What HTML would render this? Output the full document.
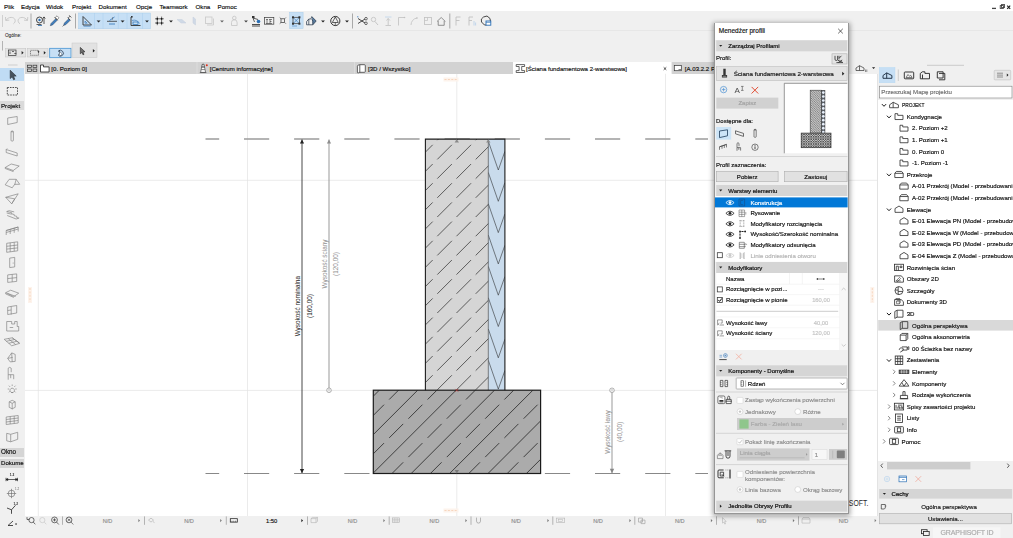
<!DOCTYPE html>
<html lang="pl"><head><meta charset="utf-8"><title>Menedżer profili</title><style>
html,body{margin:0;padding:0}
body{width:1013px;height:538px;position:relative;overflow:hidden;background:#f0f0f0;
 font-family:"Liberation Sans",sans-serif;font-size:6.1px;color:#111;}
div,span,svg{position:absolute;box-sizing:border-box}
.t{white-space:nowrap;line-height:10px;height:10px;-webkit-text-stroke:0.16px}
.sb{-webkit-text-stroke:0.24px}
.b{font-weight:bold}
svg{overflow:visible}
.hdr{background:#d5d5d5}
.btn{background:#e1e1e1;border:0.6px solid #adadad;text-align:center}
.g{color:#9a9a9a}
</style></head><body>
<div id="app" style="left:0;top:0;width:1013px;height:538px;opacity:0.999">
<div style="left:0.00px;top:0.00px;width:1013.00px;height:11.20px;background:#fff"></div>
<div class="t " style="left:4.00px;top:1.50px;font-size:6.2px;">Plik</div>
<div class="t " style="left:21.00px;top:1.50px;font-size:6.2px;">Edycja</div>
<div class="t " style="left:46.00px;top:1.50px;font-size:6.2px;">Widok</div>
<div class="t " style="left:72.00px;top:1.50px;font-size:6.2px;">Projekt</div>
<div class="t " style="left:98.50px;top:1.50px;font-size:6.2px;">Dokument</div>
<div class="t " style="left:136.00px;top:1.50px;font-size:6.2px;">Opcje</div>
<div class="t " style="left:159.50px;top:1.50px;font-size:6.2px;">Teamwork</div>
<div class="t " style="left:195.50px;top:1.50px;font-size:6.2px;">Okna</div>
<div class="t " style="left:217.50px;top:1.50px;font-size:6.2px;">Pomoc</div>
<svg style="left:990.00px;top:3.00px;" width="22.00" height="8.00" viewBox="0 0 22.00 8.00"><path d="M2 5.4h4" stroke="#444" stroke-width="1.3" fill="none"/><rect x="10.2" y="2.6" width="3.2" height="2.8" fill="#fff" stroke="#333" stroke-width="0.8"/><rect x="11.4" y="1.6" width="3.2" height="2.8" fill="none" stroke="#333" stroke-width="0.8"/><path d="M17.2 2.6l3 3.2M20.2 2.6l-3 3.2" stroke="#222" stroke-width="1.15" fill="none"/></svg>
<div style="left:0.00px;top:11.20px;width:1013.00px;height:19.00px;background:#f0f0f0"></div>
<div style="left:0.00px;top:30.00px;width:1013.00px;height:0.60px;background:#e7e7e7"></div>
<svg style="left:0.00px;top:0.00px;" width="1013.00" height="31.00" viewBox="0 0 1013.00 31.00"><path d="M2.5 15v12" stroke="#c8c8c8" stroke-width="0.8"/><path d="M13.4 23.8C16.6 21.6 15.4 17.4 11.2 17.4C9 17.4 7.4 18.5 6 20.2M5.5 17l0.3 3.5 3.5-0.4" stroke="#c4c4c4" stroke-width="0.85" fill="none"/><path d="M19.9 23.8C16.7 21.6 17.9 17.4 22.1 17.4C24.3 17.4 25.9 18.5 27.3 20.2M27.8 17l-0.3 3.5-3.5-0.4" stroke="#c4c4c4" stroke-width="0.85" fill="none"/><path d="M31.00 13.5v15" stroke="#8a8a8a" stroke-width="0.7"/><circle cx="39.5" cy="20" r="3" fill="none" stroke="#333" stroke-width="0.9"/><circle cx="39.5" cy="20" r="1.2" fill="#2a6fb5"/><path d="M36.5 24.5h5M44 17v7M42.7 18.5l1.3-1.6 1.3 1.6" stroke="#333" stroke-width="0.8" fill="none"/><path d="M38 25.5h4" stroke="#2a6fb5" stroke-width="0.8"/><path d="M50.3 25.7l0.8-2.3 4.6-4.6 1.5 1.5-4.6 4.6z" fill="#3f7fc0" stroke="#1f3550" stroke-width="0.45"/><path d="M55.2 17.6l1.8-1.8 2 2-1.8 1.8z" fill="#fff" stroke="#333" stroke-width="0.5"/><path d="M54.6 17.2l3 3" stroke="#333" stroke-width="0.8"/><path d="M63.6 25.4l0.8-2.3 4.4-4.4 1.5 1.5-4.4 4.4z" fill="#3f7fc0" stroke="#1f3550" stroke-width="0.45"/><path d="M68.2 18l2-2M69.2 15.3l2.2 2.2M67.6 17.6l2.6 2.6M63.6 25.4l-1 1" stroke="#333" stroke-width="0.7"/><path d="M75.50 13.5v15" stroke="#8a8a8a" stroke-width="0.7"/><rect x="78.5" y="13" width="72" height="15.8" fill="#c6dff5" stroke="#a9cdec" stroke-width="0.5"/><path d="M94.5 13v15.8M103 13v15.8M118.3 13v15.8M127 13v15.8M142.5 13v15.8" stroke="#a9cdec" stroke-width="0.5"/><path d="M83 16.5v8.5h8.5z" fill="none" stroke="#333" stroke-width="0.9"/><path d="M85 21v2.2h2.2z" fill="none" stroke="#2a6fb5" stroke-width="0.6"/><path d="M83.6 26.2h7" stroke="#2a6fb5" stroke-width="0.6"/><path d="M96.65 20.40l1.95 2.2l1.95-2.2z" fill="#222"/><path d="M107 21.3h10" stroke="#333" stroke-width="0.8"/><path d="M109 24h6" stroke="#2a6fb5" stroke-width="0.8"/><path d="M109.5 20.5l5-3.5" stroke="#2a6fb5" stroke-width="0.8"/><path d="M112.5 17v3" stroke="#666" stroke-width="0.5"/><path d="M120.65 20.40l1.95 2.2l1.95-2.2z" fill="#222"/><path d="M131 17v8.5h9.5" fill="none" stroke="#333" stroke-width="0.9"/><rect x="131" y="16" width="1.6" height="1.6" fill="#333"/><rect x="133" y="22" width="5" height="2.5" fill="none" stroke="#2a6fb5" stroke-width="0.7"/><path d="M132 20.5a6 6 0 0 1 7.5 3" fill="none" stroke="#2a6fb5" stroke-width="0.6"/><path d="M145.05 20.40l1.95 2.2l1.95-2.2z" fill="#222"/><path d="M157.3 16.6v8.6M161.6 16.6v8.6M155 18.8h8.8M155 23h8.8" stroke="#222" stroke-width="0.65"/><g fill="#111"><circle cx="157.3" cy="18.8" r="0.85"/><circle cx="161.6" cy="18.8" r="0.85"/><circle cx="157.3" cy="23" r="0.85"/><circle cx="161.6" cy="23" r="0.85"/></g><path d="M169.05 20.40l1.95 2.2l1.95-2.2z" fill="#222"/><path d="M177 19.5l5 0 4 3.5-5 0z" fill="#cfd9e6" stroke="#c5cfdc" stroke-width="0.5"/><path d="M193 17l2.5 2v6l-2.5-2z" fill="#cfd9e6" stroke="#c5cfdc" stroke-width="0.5"/><rect x="205.5" y="17" width="6.5" height="6.5" fill="none" stroke="#c8c8c8" stroke-width="0.8"/><path d="M207 25h6.5v-6.5" fill="none" stroke="#c8c8c8" stroke-width="0.8"/><path d="M220.05 20.40l1.95 2.2l1.95-2.2z" fill="#666"/><circle cx="234.3" cy="18" r="1.8" fill="none" stroke="#c4c4c4" stroke-width="0.8"/><path d="M231.5 25.5v-3a2.8 2.8 0 0 1 5.6 0v3z" fill="none" stroke="#c4c4c4" stroke-width="0.8"/><path d="M244.05 20.40l1.95 2.2l1.95-2.2z" fill="#444"/><path d="M252 24.5h8M252 26h8" stroke="#222" stroke-width="0.8"/><path d="M253 18l5 1.5M253 18l1.5 4" stroke="#333" stroke-width="0.8"/><circle cx="258.5" cy="21.5" r="1.8" fill="#2a6fb5"/><rect x="252" y="16" width="2.5" height="2" fill="#333"/><rect x="264.6" y="17.6" width="9.2" height="6.6" fill="none" stroke="#444" stroke-width="0.75"/><path d="M267 19.5v4M266 19.5h2M270 19.5v4M269 19.5h3M270 21.5h1.5M266 23.5h6" stroke="#333" stroke-width="0.6"/><rect x="281" y="18.8" width="3.6" height="3.6" fill="none" stroke="#333" stroke-width="0.7"/><path d="M281 18.8l-1.3-1.3M284.6 18.8l1.3-1.3M281 22.4l-1.3 1.3M284.6 22.4l1.3 1.3" stroke="#333" stroke-width="0.65"/><rect x="289.7" y="12.3" width="13.4" height="16.3" fill="#c6dff5" stroke="#a9cdec" stroke-width="0.5"/><rect x="293" y="17.3" width="6.4" height="6.4" fill="none" stroke="#333" stroke-width="0.7"/><path d="M293 17.3l6.4 6.4M299.4 17.3l-6.4 6.4" stroke="#2a6fb5" stroke-width="0.6"/><g fill="#333"><rect x="292" y="16.3" width="2" height="2"/><rect x="298.4" y="16.3" width="2" height="2"/><rect x="292" y="22.7" width="2" height="2"/><rect x="298.4" y="22.7" width="2" height="2"/></g><path d="M292 26h5" stroke="#2a6fb5" stroke-width="0.5"/><path d="M311.8 16.6l4.4 4.4-3.4 3.8z" fill="#5b7d9f"/><path d="M306.6 21.6l2.2-2.6h2l1-2.4 4.4 4.4-3.4 3.8h-6.2zM308.8 19v5.8M312.8 24.8v-3.6l-1-2.2" fill="none" stroke="#2b3b4d" stroke-width="0.75"/><path d="M321.05 20.40l1.95 2.2l1.95-2.2z" fill="#222"/><circle cx="335.3" cy="21" r="4.6" fill="none" stroke="#222" stroke-width="0.9"/><path d="M335.3 17l-3 5.5h6z" fill="none" stroke="#222" stroke-width="0.7"/><path d="M335.3 22.5v3" stroke="#222" stroke-width="0.6"/><path d="M345.05 20.40l1.95 2.2l1.95-2.2z" fill="#222"/><path d="M352.50 13.5v15" stroke="#8a8a8a" stroke-width="0.7"/><path d="M358 18.5l7 4.5M358 23.5l7-4.5" stroke="#333" stroke-width="0.9"/><circle cx="366" cy="18.7" r="1.3" fill="none" stroke="#333" stroke-width="0.7"/><circle cx="366" cy="23.3" r="1.3" fill="none" stroke="#333" stroke-width="0.7"/><path d="M357.8 16v1.5" stroke="#2a6fb5" stroke-width="0.7"/><circle cx="373.5" cy="19.5" r="2.2" fill="none" stroke="#c0c0c0" stroke-width="0.8"/><path d="M375 21.5l3 3.5" stroke="#c0c0c0" stroke-width="0.9"/><path d="M385 17h6.5" stroke="#bcd3ea" stroke-width="0.8"/><path d="M388.2 18.5v6.5M386.5 20.5l1.7-2 1.7 2M385.5 25.5h5.5" stroke="#c0c0c0" stroke-width="0.8" fill="none"/><path d="M398.5 25.5v-8h6" stroke="#c0c0c0" stroke-width="0.8" fill="none"/><circle cx="404.5" cy="17.5" r="0.8" fill="#c0c0c0"/><path d="M411 25a7 7 0 0 1 6-7" stroke="#c0c0c0" stroke-width="0.8" fill="none"/><circle cx="417" cy="18" r="0.8" fill="#c0c0c0"/><rect x="424.5" y="17.5" width="7" height="7" fill="none" stroke="#c0c0c0" stroke-width="0.8"/><path d="M424.5 20.5h3v-3" stroke="#c0c0c0" stroke-width="0.7" fill="none"/><path d="M437 21.5l4.2-4 4.2 4M438.2 21v4.3h6v-4.3" stroke="#777" stroke-width="0.8" fill="none"/><path d="M449.80 13.5v15" stroke="#8a8a8a" stroke-width="0.7"/><path d="M456 25.5v-8.5h4.5M456 20.5h3.5" stroke="#c0c0c0" stroke-width="0.9" fill="none"/><path d="M469 25.5v-8.5h4M469 20.5h3" stroke="#c0c0c0" stroke-width="0.9" fill="none"/><path d="M474 21v4.5M475.6 22.5v3" stroke="#bcd3ea" stroke-width="0.9"/><path d="M481.5 22a4 4 0 0 1 2-5l3.5-1 3 2.5 0.5 3.5" stroke="#333" stroke-width="0.9" fill="none"/><path d="M481.5 22l3 3h2" stroke="#333" stroke-width="0.9" fill="none"/><rect x="486" y="21" width="4.8" height="4.2" fill="#fff" stroke="#2a6fb5" stroke-width="0.9"/><path d="M486 22.3h4.8" stroke="#2a6fb5" stroke-width="0.7"/></svg>
<div style="left:0.00px;top:30.60px;width:1013.00px;height:31.40px;background:#f0f0f0"></div>
<div class="t " style="left:4.90px;top:30.90px;font-size:4.7px;color:#222;-webkit-text-stroke:0.05px">Ogólne:</div>
<svg style="left:0.00px;top:0.00px;" width="120.00" height="62.00" viewBox="0 0 120.00 62.00"><path d="M2.5 41v9.5" stroke="#9a9a9a" stroke-width="0.7"/><rect x="5.5" y="48.3" width="20.3" height="8.7" fill="#e4e4e4" stroke="#c2c2c2" stroke-width="0.5"/><rect x="8.5" y="50" width="7.5" height="5.5" fill="none" stroke="#333" stroke-width="0.7"/><path d="M10 51.5v2.5M12 51.5l2 0M14.3 53.5h2" stroke="#333" stroke-width="0.7"/><path d="M21.6 50.9l2 1.8-2 1.8z" fill="#222"/><rect x="27.5" y="48.3" width="20.5" height="8.7" fill="#e4e4e4" stroke="#c2c2c2" stroke-width="0.5"/><rect x="30.5" y="50.3" width="8" height="5" fill="none" stroke="#333" stroke-width="0.6" stroke-dasharray="1.2 0.8"/><path d="M37.5 50.5l2.3 1.5-1.2 0.3-0.3 1.2z" fill="#222"/><path d="M43.8 50.9l2 1.8-2 1.8z" fill="#222"/><rect x="49.7" y="48.3" width="21.3" height="9.4" fill="#c6dff5" stroke="#3c8fd0" stroke-width="0.75"/><path d="M58 54.8a2.9 2.9 0 1 0 0.4-3.6" fill="none" stroke="#1f3044" stroke-width="0.75"/><path d="M59.6 49.8l-1.6 1.5 2 0.5z" fill="#1f3044"/><path d="M59.5 54.4v-2.4l0.8 0.2 0.8 0.4 0.6 0.8v1.2l-0.8 0.9h-1.1l-1.2-1.3z" fill="#fff" stroke="#1f3044" stroke-width="0.5"/><rect x="72" y="43" width="25" height="14.5" fill="#e2e2e2" stroke="#c6c6c6" stroke-width="0.5"/><path d="M80.3 47.4v6.4l1.6-1.4 1.1 2.4 1-0.45-1.1-2.4 2.1-0.15z" fill="#6e6e6e" stroke="#262626" stroke-width="0.6"/><path d="M92.9 48.9l2 1.8-2 1.8z" fill="#222"/></svg>
<div style="left:25.00px;top:62.00px;width:853.00px;height:11.80px;background:#d2d2d2"></div>
<div style="left:0.00px;top:62.00px;width:25.00px;height:5.50px;background:#f0f0f0"></div>
<div style="left:513.00px;top:62.00px;width:158.50px;height:11.80px;background:#fff"></div>
<div style="left:849.00px;top:62.00px;width:29.00px;height:11.80px;background:#f0f0f0"></div>
<svg style="left:0.00px;top:0.00px;" width="1013.00" height="75.00" viewBox="0 0 1013.00 75.00"><g fill="none" stroke="#333" stroke-width="0.7"><rect x="27.6" y="65.2" width="3.8" height="2.4"/><rect x="33" y="65.2" width="3.8" height="2.4"/><rect x="27.6" y="69" width="3.8" height="2.4"/><rect x="33" y="69" width="3.8" height="2.4"/></g><path d="M39.5 62v11.8" stroke="#dedede" stroke-width="0.8"/><path d="M197.0 62v11.8" stroke="#dedede" stroke-width="0.8"/><path d="M354.5 62v11.8" stroke="#dedede" stroke-width="0.8"/><path d="M671.8 62v11.8" stroke="#dedede" stroke-width="0.8"/><path d="M40.5 72v-7h3v1.9h5.6v5.1z" fill="#fff" stroke="#2e2e2e" stroke-width="0.85"/><path d="M200.6 72.4l1.1-5.4h2.8l1.1 5.4zM201.2 67h3.8M201.9 67v-2.2h2.4v2.2M201.9 64.8l1.2-0.9 1.2 0.9M199.8 72.6h6.6M201.3 69.6h3.6" fill="#fff" stroke="#3a3a3a" stroke-width="0.6"/><circle cx="206.8" cy="65.2" r="1" fill="#e0301c"/><path d="M357.4 66.2q0-0.8 0.8-1l1.6-0.5h4.6q0.9 0 0.9 0.9v5.8q0 0.9-0.9 0.9h-4.6l-1.6 0.6q-0.8 0.2-0.8-0.7zM359.8 64.8v7.6" fill="#fff" stroke="#333" stroke-width="0.75"/><path d="M516.2 64.6h8.4v1.9h-2.9v4.1h2.9v1.9h-8.4v-1.9h2.9v-4.1h-2.9z" fill="#fff" stroke="#333" stroke-width="0.75"/><path d="M663.7 67.3l2.6 2.6M666.3 67.3l-2.6 2.6" stroke="#222" stroke-width="0.8"/><rect x="674.3" y="65.5" width="7" height="5.2" fill="#fff" stroke="#333" stroke-width="0.7"/><path d="M678.5 69.5h2.5" stroke="#333" stroke-width="0.6"/><path d="M856 70.5v-2.5l3.5-2.3 4.5 2.3v2.5zM859.5 65.7v4.8" fill="none" stroke="#333" stroke-width="0.7"/><path d="M865.5 69.5v2.5M866.8 69.5v2.5" stroke="#333" stroke-width="0.5"/><path d="M872 67.3l1.6 1.8 1.6-1.8z" fill="#222"/></svg>
<div class="t " style="left:51.30px;top:63.70px;font-size:6.1px;">[0. Poziom 0]</div>
<div class="t " style="left:209.70px;top:63.70px;font-size:6.1px;">[Centrum informacyjne]</div>
<div class="t " style="left:368.00px;top:63.70px;font-size:6.1px;">[3D / Wszystko]</div>
<div class="t " style="left:526.00px;top:63.70px;font-size:6.1px;">[Ściana fundamentowa 2-warstwowa]</div>
<div class="t " style="left:684.80px;top:63.70px;font-size:6.1px;">[A.03.2.2 Po</div>
<div style="left:25.00px;top:73.80px;width:853.00px;height:442.70px;background:#fff"></div>
<svg style="left:0.00px;top:0.00px;" width="1013.00" height="538.00" viewBox="0 0 1013.00 538.00"><path d="M25 180.3h853" stroke="#e3e3e3" stroke-width="0.7"/><path d="M25 390.4h853" stroke="#e3e3e3" stroke-width="0.7"/><path d="M38.3 73.8v442.7" stroke="#e3e3e3" stroke-width="0.7"/><path d="M247.5 73.8v442.7" stroke="#e3e3e3" stroke-width="0.7"/><path d="M456.8 73.8v442.7" stroke="#e3e3e3" stroke-width="0.7"/><path d="M665.5 73.8v442.7" stroke="#e3e3e3" stroke-width="0.7"/><rect x="443.5" y="77.5" width="15" height="4" fill="#fdf3ec"/><path d="M444.5 79.5h13.5" stroke="#f3c3a0" stroke-width="0.6" stroke-dasharray="2 1.4"/><rect x="443.5" y="508.5" width="15" height="4" fill="#fdf3ec"/><path d="M444.5 510.5h13.5" stroke="#f3c3a0" stroke-width="0.6" stroke-dasharray="2 1.4"/><rect x="28" y="287" width="4" height="16" fill="#fdf3ec"/><path d="M30 288v14" stroke="#f3c3a0" stroke-width="0.6" stroke-dasharray="2 1.4"/><rect x="870.3" y="287" width="4" height="16" fill="#fdf3ec"/><path d="M872.3 288v14" stroke="#f3c3a0" stroke-width="0.6" stroke-dasharray="2 1.4"/><path d="M205.5 139.1H219.2M244.0 139.1H269.2M294.1 139.1H319.3M344.3 139.1H369.5M394.4 139.1H419.6M444.6 139.1H469.8M494.7 139.1H519.9M544.9 139.1H570.1M595.0 139.1H620.2M645.2 139.1H670.4M695.3 139.1H708.0" stroke="#9c9c9c" stroke-width="1.5"/><path d="M205.5 473.5H219.2M244.0 473.5H269.2M294.1 473.5H319.3M344.3 473.5H369.5M394.4 473.5H419.6M444.6 473.5H469.8M494.7 473.5H519.9M544.9 473.5H570.1M595.0 473.5H620.2M645.2 473.5H670.4M695.3 473.5H708.0" stroke="#555" stroke-width="0.7"/><defs><clipPath id="cw"><rect x="425.4" y="139.1" width="62.9" height="251.1"/></clipPath><clipPath id="cb"><rect x="488.3" y="139.1" width="16.6" height="251.1"/></clipPath><clipPath id="cf"><rect x="373.3" y="390.2" width="167.3" height="83.3"/></clipPath></defs><rect x="425.4" y="139.1" width="62.9" height="251.1" fill="#d5d5d5"/><rect x="488.3" y="139.1" width="16.6" height="251.1" fill="#c9dbec"/><rect x="373.3" y="390.2" width="167.3" height="83.3" fill="#ababab"/><g clip-path="url(#cw)" stroke="#333" stroke-width="0.75" stroke-dasharray="20.60 6.55" fill="none"><path d="M418.10 159.40L439.40 138.10"/><path d="M418.10 178.60L458.60 138.10"/><path d="M418.10 197.80L477.80 138.10"/><path d="M418.10 217.00L489.30 145.80"/><path d="M418.10 236.20L489.30 165.00"/><path d="M418.10 255.40L489.30 184.20"/><path d="M418.10 274.60L489.30 203.40"/><path d="M418.10 293.80L489.30 222.60"/><path d="M418.10 313.00L489.30 241.80"/><path d="M418.10 332.20L489.30 261.00"/><path d="M418.10 351.40L489.30 280.20"/><path d="M418.10 370.60L489.30 299.40"/><path d="M418.10 389.80L489.30 318.60"/><path d="M418.10 409.00L489.30 337.80"/><path d="M437.30 409.00L489.30 357.00"/><path d="M456.50 409.00L489.30 376.20"/></g><g clip-path="url(#cf)" stroke="#1c1c1c" stroke-width="0.75" fill="none"><path d="M373.30 396.20L379.30 390.20"/><path d="M373.30 434.60L417.70 390.20"/><path d="M373.30 473.00L456.10 390.20"/><path d="M411.20 473.50L494.50 390.20"/><path d="M449.60 473.50L532.90 390.20"/><path d="M488.00 473.50L540.60 420.90"/><path d="M526.40 473.50L540.60 459.30"/><g stroke-dasharray="19.80 7.35"><path d="M370.00 418.70L399.50 389.20"/><path d="M370.00 457.10L437.90 389.20"/><path d="M389.20 476.30L476.30 389.20"/><path d="M427.60 476.30L514.70 389.20"/><path d="M466.00 476.30L541.60 400.70"/><path d="M504.40 476.30L541.60 439.10"/></g></g><path clip-path="url(#cb)" d="M488.3 141.2L498.3 170.0L504.9 151.4M488.3 172.5L498.3 201.3L504.9 182.7M488.3 203.8L498.3 232.6L504.9 214.0M488.3 235.1L498.3 263.9L504.9 245.3M488.3 266.4L498.3 295.2L504.9 276.6M488.3 297.7L498.3 326.5L504.9 307.9M488.3 329.0L498.3 357.8L504.9 339.2M488.3 360.3L498.3 389.1L504.9 370.5" stroke="#222" stroke-width="0.55" fill="none"/><path d="M488.3 139.1V390.2" stroke="#333" stroke-width="0.6"/><path d="M425.4 390.2V139.1H504.9V390.2" stroke="#1e1e1e" stroke-width="1.1" fill="none"/><rect x="373.3" y="390.2" width="167.3" height="83.3" stroke="#1a1a1a" stroke-width="1.2" fill="none"/><path d="M454.6 142.6l2.2-3.4 2.2 3.4zM486.1 142.6l2.2-3.4 2.2 3.4z" fill="#8a8a8a"/><path d="M454.6 470l2.2 3.4 2.2-3.4z" fill="#7a7a7a"/><path d="M455.4 388.9l2.8 2.8M458.2 388.9l-2.8 2.8" stroke="#b03030" stroke-width="0.7"/><path d="M302 139.5V473" stroke="#333" stroke-width="0.9"/><path d="M299.9 143.6l2.1-4.2 2.1 4.2zM299.9 469l2.1 4.2 2.1-4.2z" fill="#222"/><path d="M329 139.5V388" stroke="#939393" stroke-width="0.95"/><path d="M326.9 143.6l2.1-4.2 2.1 4.2z" fill="#8e8e8e"/><circle cx="329" cy="390.3" r="2.3" fill="#fff" stroke="#7e7e7e" stroke-width="0.6"/><circle cx="329" cy="390.3" r="0.9" fill="none" stroke="#9a9a9a" stroke-width="0.4"/><path d="M612 392.6V473" stroke="#939393" stroke-width="0.95"/><path d="M609.8 468.8l2.2 4.4 2.2-4.4z" fill="#858585"/><circle cx="612" cy="390.3" r="2.3" fill="#fff" stroke="#7e7e7e" stroke-width="0.6"/><circle cx="612" cy="390.3" r="0.9" fill="none" stroke="#9a9a9a" stroke-width="0.4"/><text transform="translate(300.3 306.2) rotate(-90) scale(0.89 1)" text-anchor="middle" font-size="7.2" fill="#1e1e1e" font-family="Liberation Sans, sans-serif">Wysokość nominalna</text><text transform="translate(311.8 306.0) rotate(-90) scale(0.89 1)" text-anchor="middle" font-size="7.2" fill="#1e1e1e" font-family="Liberation Sans, sans-serif">(160,00)</text><text transform="translate(327.2 264.0) rotate(-90) scale(0.89 1)" text-anchor="middle" font-size="7.2" fill="#8e8e8e" font-family="Liberation Sans, sans-serif">Wysokość ściany</text><text transform="translate(337.8 264.0) rotate(-90) scale(0.89 1)" text-anchor="middle" font-size="7.2" fill="#8e8e8e" font-family="Liberation Sans, sans-serif">(120,00)</text><text transform="translate(610.2 432.0) rotate(-90) scale(0.89 1)" text-anchor="middle" font-size="7.2" fill="#8e8e8e" font-family="Liberation Sans, sans-serif">Wysokość ławy</text><text transform="translate(621.6 432.0) rotate(-90) scale(0.89 1)" text-anchor="middle" font-size="7.2" fill="#8e8e8e" font-family="Liberation Sans, sans-serif">(40,00)</text><text transform="translate(868.4 506.4) scale(0.72 1)" text-anchor="end" font-size="9.6" fill="#2a2a2a" font-family="Liberation Sans, sans-serif">GRAPHISOFT.</text></svg>
<div style="left:25.00px;top:516.40px;width:853.00px;height:10.20px;background:#f0f0f0"></div>
<div style="left:0.00px;top:526.60px;width:1013.00px;height:11.40px;background:#f0f0f0"></div>
<svg style="left:0.00px;top:0.00px;" width="1013.00" height="538.00" viewBox="0 0 1013.00 538.00"><g transform="translate(0 -0.9)"><path d="M62.5 517.3v8.4" stroke="#8a8a8a" stroke-width="0.6"/><path d="M144.5 517.3v8.4" stroke="#8a8a8a" stroke-width="0.6"/><path d="M226.3 517.3v8.4" stroke="#8a8a8a" stroke-width="0.6"/><path d="M307.5 517.3v8.4" stroke="#8a8a8a" stroke-width="0.6"/><path d="M389.2 517.3v8.4" stroke="#8a8a8a" stroke-width="0.6"/><path d="M471.0 517.3v8.4" stroke="#8a8a8a" stroke-width="0.6"/><path d="M552.8 517.3v8.4" stroke="#8a8a8a" stroke-width="0.6"/><path d="M634.8 517.3v8.4" stroke="#8a8a8a" stroke-width="0.6"/><path d="M716.5 517.3v8.4" stroke="#8a8a8a" stroke-width="0.6"/><path d="M798.5 517.3v8.4" stroke="#8a8a8a" stroke-width="0.6"/><circle cx="31.5" cy="521" r="2.6" fill="none" stroke="#333" stroke-width="0.7"/><path d="M33.3 523l2 2.2M27 518v2.4h2.4" stroke="#333" stroke-width="0.7" fill="none"/><circle cx="42.3" cy="521" r="2.6" fill="none" stroke="#c8c8c8" stroke-width="0.7"/><path d="M44.3 523l2 2.2" stroke="#c8c8c8" stroke-width="0.7" fill="none"/><circle cx="54.5" cy="520.8" r="2.9" fill="none" stroke="#333" stroke-width="0.7"/><path d="M56.6 523l2.2 2.4M53 520.8h3M54.5 519.3v3" stroke="#333" stroke-width="0.7" fill="none"/><circle cx="69" cy="520.8" r="2.9" fill="none" stroke="#333" stroke-width="0.7"/><path d="M71.1 523l2.2 2.4M67.5 519.5l3 2.6M70.5 519.5l-3 2.6" stroke="#333" stroke-width="0.6" fill="none"/><path d="M138.40 519.90l1.6 1.6-1.6 1.6z" fill="#777"/><path d="M148.5 521l2.5-2 2.5 2-2.5 2zM153 522.5l1.5 1" stroke="#b4b4b4" stroke-width="0.7" fill="none"/><path d="M220.20 519.90l1.6 1.6-1.6 1.6z" fill="#777"/><rect x="230.3" y="519.6" width="7" height="3.4" fill="#fff" stroke="#222" stroke-width="0.8"/><path d="M232 521.5v1.5M233.8 521.5v1.5M235.6 521.5v1.5" stroke="#222" stroke-width="0.5"/><path d="M301.40 519.90l1.6 1.6-1.6 1.6z" fill="#111"/><path d="M311 519.5l1.5-1.2h5v4l-1.5 1.2h-5zM311 519.5h5v4M316 519.5l1.5-1.2" stroke="#b4b4b4" stroke-width="0.6" fill="none"/><path d="M383.40 519.90l1.6 1.6-1.6 1.6z" fill="#777"/><rect x="392.5" y="518.8" width="7" height="4.6" fill="none" stroke="#b4b4b4" stroke-width="0.6"/><path d="M392.5 520.3h7M392.5 521.8h7M394.8 518.8v4.6M397.2 518.8v4.6" stroke="#b4b4b4" stroke-width="0.5"/><path d="M465.40 519.90l1.6 1.6-1.6 1.6z" fill="#777"/><path d="M476.5 518.5v3.5a2 2 0 0 0 4 0v-3.5" stroke="#999" stroke-width="0.7" fill="none"/><path d="M547.40 519.90l1.6 1.6-1.6 1.6z" fill="#777"/><rect x="556.3" y="519" width="8.4" height="4.6" fill="none" stroke="#b4b4b4" stroke-width="0.6"/><rect x="558.6" y="520.3" width="3.8" height="2" fill="none" stroke="#b4b4b4" stroke-width="0.5"/><path d="M629.40 519.90l1.6 1.6-1.6 1.6z" fill="#777"/><path d="M638.5 519h4v4h-4zM641 521h4v3.5h-4z" stroke="#999" stroke-width="0.6" fill="none"/><path d="M710.90 519.90l1.6 1.6-1.6 1.6z" fill="#777"/><path d="M722.5 518.5v5.5l1.3-1 1 2 0.8-0.4-1-2 1.6-0.2z" stroke="#b4b4b4" stroke-width="0.6" fill="none"/><path d="M792.90 519.90l1.6 1.6-1.6 1.6z" fill="#777"/><path d="M802 520h8v4h-8zM802 520l1-1.5h6l1 1.5" stroke="#b4b4b4" stroke-width="0.6" fill="none"/><path d="M874.70 519.90l1.6 1.6-1.6 1.6z" fill="#777"/></g></svg>
<div class="t " style="left:97.50px;top:515.90px;width:20.00px;text-align:center;color:#8f8f8f;font-size:5.6px;">N/D</div>
<div class="t " style="left:179.00px;top:515.90px;width:20.00px;text-align:center;color:#8f8f8f;font-size:5.6px;">N/D</div>
<div class="t " style="left:342.60px;top:515.90px;width:20.00px;text-align:center;color:#8f8f8f;font-size:5.6px;">N/D</div>
<div class="t " style="left:424.40px;top:515.90px;width:20.00px;text-align:center;color:#8f8f8f;font-size:5.6px;">N/D</div>
<div class="t " style="left:506.00px;top:515.90px;width:20.00px;text-align:center;color:#8f8f8f;font-size:5.6px;">N/D</div>
<div class="t " style="left:588.00px;top:515.90px;width:20.00px;text-align:center;color:#8f8f8f;font-size:5.6px;">N/D</div>
<div class="t " style="left:669.80px;top:515.90px;width:20.00px;text-align:center;color:#8f8f8f;font-size:5.6px;">N/D</div>
<div class="t " style="left:751.50px;top:515.90px;width:20.00px;text-align:center;color:#8f8f8f;font-size:5.6px;">N/D</div>
<div class="t " style="left:833.50px;top:515.90px;width:20.00px;text-align:center;color:#8f8f8f;font-size:5.6px;">N/D</div>
<div class="t " style="left:266.00px;top:515.90px;font-size:5.8px;color:#111">1:50</div>
<div style="left:0.00px;top:67.40px;width:24.60px;height:459.20px;background:#f0f0f0"></div>
<div style="left:0.00px;top:67.50px;width:24.40px;height:13.90px;background:#c0dcf4"></div>
<div style="left:0.00px;top:101.40px;width:24.40px;height:9.00px;background:#dadada"></div>
<div style="left:0.00px;top:447.50px;width:24.40px;height:9.20px;background:#d5d5d5"></div>
<div style="left:0.00px;top:458.60px;width:24.40px;height:9.40px;background:#d5d5d5"></div>
<div class="t " style="left:1.00px;top:101.20px;font-size:6.15px">Projekt</div>
<div class="t " style="left:1.00px;top:447.10px;font-size:6.3px">Okno</div>
<div class="t " style="left:1.00px;top:458.10px;font-size:6.1px;width:23px;overflow:hidden">Dokume</div>
<svg style="left:0.00px;top:0.00px;overflow:hidden" width="26.00" height="527.00" viewBox="0 0 26.00 527.00"><path d="M8 65h9.5" stroke="#c9c9c9" stroke-width="0.9"/><path d="M10.2 70.2v8.4l2-1.8 1.4 3 1.3-0.6-1.4-3 2.7-0.2z" fill="#46535f" stroke="#2a3038" stroke-width="0.6"/><rect x="7.3" y="87.5" width="10.2" height="7.5" fill="none" stroke="#222" stroke-width="0.8" stroke-dasharray="1.6 1"/><g transform="translate(12.2 120.5)" fill="none" stroke="#7d7d7d" stroke-width="0.65"><path d="M-4.5 -2.5l9.5-1.5v6l-9.5 2z"/></g><g transform="translate(12.2 136.3)" fill="none" stroke="#7d7d7d" stroke-width="0.65"><path d="M-1.2 -4.5h2.4v8.5a1.2 0.8 0 0 1-2.4 0zM-1.2 -4.5a1.2 0.8 0 0 1 2.4 0"/></g><g transform="translate(12.2 152.0)" fill="none" stroke="#7d7d7d" stroke-width="0.65"><path d="M-6 -2.5l11 3.5v3l-11-3.5zM-6 -2.5l1-1"/></g><g transform="translate(12.2 167.5)" fill="none" stroke="#7d7d7d" stroke-width="0.65"><path d="M-7 0l6-3.5 8 2-6 4.5zM-7 0v1l8 3v-1"/></g><g transform="translate(12.2 183.3)" fill="none" stroke="#7d7d7d" stroke-width="0.65"><path d="M-7 1.5l4-5.5h7l3.5 5-5 0-2.5 3.5zM4 -4l-1.5 5.5"/></g><g transform="translate(12.2 199.3)" fill="none" stroke="#7d7d7d" stroke-width="0.65"><path d="M-6.5 -2l6 6.5 6.5-10zM-6.5 -2l9 1.5M-0.5 4.5l3-5"/></g><g transform="translate(12.2 215.0)" fill="none" stroke="#7d7d7d" stroke-width="0.65"><path d="M-5.5 -3.5l5 1.2 0 1.2 2.5 0.6 0 1.2 2.5 0.6 0 1.2 2 0.5M-5.5 -2l5 1.2M-5.5 -3.5l2.5-0.8 5 1.2M-5 0.5l9 3.5 3-1"/></g><g transform="translate(12.2 231.0)" fill="none" stroke="#7d7d7d" stroke-width="0.65"><path d="M-6 4v-4.5l12-3.5v4.5M-6 -0.5l12-3.5M-2 3v-4.5M2 1.8v-4.5M-6 1.5l12-3.5"/></g><g transform="translate(12.2 246.8)" fill="none" stroke="#7d7d7d" stroke-width="0.65"><path d="M-5.5 -3.5l11-1.5v9l-11 1.5zM-2 -4v9M2 -4.5v9M-5.5 -0.5l11-1.3M-5.5 2.3l11-1.2"/></g><g transform="translate(12.2 262.6)" fill="none" stroke="#7d7d7d" stroke-width="0.65"><path d="M-2.5 -4.5l5-0.7v9.5l-5 0.7zM1 0v1"/></g><g transform="translate(12.2 278.4)" fill="none" stroke="#7d7d7d" stroke-width="0.65"><path d="M-4.5 -3.5l9-1v7.5l-9 1zM0 -4v7.5M-4.5 0.2l9-1"/></g><g transform="translate(12.2 294.2)" fill="none" stroke="#7d7d7d" stroke-width="0.65"><path d="M-6.5 -1.5l5-2.5 8 3-5 3.5zM-4.5 -0.8l8 3M-6.5 -1.5v1.2l8 3.5"/></g><g transform="translate(12.2 310.0)" fill="none" stroke="#7d7d7d" stroke-width="0.65"><path d="M-4.5 -3l9-1.5v7.5l-9 1.5zM-1 -3.5v8M-4.5 0.5l3.5-0.5"/></g><g transform="translate(12.2 326.0)" fill="none" stroke="#7d7d7d" stroke-width="0.65"><path d="M-5.5 -4.5h5v2.5h3v-2.5h2.5v5h1.5v4.5h-12zM-2.5 1.5h3.5"/></g><g transform="translate(12.2 341.8)" fill="none" stroke="#7d7d7d" stroke-width="0.65"><path d="M-8 -2.5l8-1.5 7.5 5.5-8 2.5zM-4 -3.2l7.5 6M0 -4l7 5M-6 -0.5l8-1.7M-3.5 1.5l8-2"/></g><g transform="translate(12.2 357.4)" fill="none" stroke="#7d7d7d" stroke-width="0.65"><path d="M-4.5 1l4-5.5 3.5 1.5 0 7-5 0.5zM-0.5 -4.5l0.5 9M-4.5 1l5-1"/></g><g transform="translate(12.2 373.2)" fill="none" stroke="#7d7d7d" stroke-width="0.65"><path d="M-4 -5v6.5h5.5v4.5M-4 1.5v5M-1.5 1.5v3.5M-4 -5a2 2 0 0 1 3 0v4"/></g><g transform="translate(12.2 389.0)" fill="none" stroke="#7d7d7d" stroke-width="0.65"><path d="M0 -0.8a2.2 2.2 0 1 0 0.01 0M-1 3.5h2M0 -4.5v1.5M-4.5 0h1.5M3 0h1.5M-3.3 -3.3l1.2 1.2M3.3 -3.3l-1.2 1.2M-3.3 3.3l1-1M3.3 3.3l-1-1"/></g><g transform="translate(12.2 404.8)" fill="none" stroke="#7d7d7d" stroke-width="0.65"><path d="M-3 -3l3-1.5 3 1.5v5.5l-3 1.5-3-1.5zM-3 -3l3 1.5 3-1.5M0 -1.5v6"/></g><g transform="translate(12.2 420.5)" fill="none" stroke="#7d7d7d" stroke-width="0.65"><path d="M-6 -3.5l12-1.5v7.5l-12 1.5zM-2 -4v7.5M2 -4.5v7.5M-6 -1l12-1.5M-6 1.5l12-1.5"/></g><g transform="translate(12.2 436.3)" fill="none" stroke="#7d7d7d" stroke-width="0.65"><path d="M-5.5 -3l4 1v7.5l-4-1zM-1.5 -2l7-2v7l-7 2.5"/></g><g stroke="#222" stroke-width="0.7" fill="none"><path d="M6 479.5h11.5M6 477.8v3.4M17.5 477.8v3.4"/><path d="M6 479.5l1.8-1v2zM17.5 479.5l-1.8-1v2z" fill="#222"/></g><text x="9.8" y="476.3" font-size="3.2" fill="#222" font-family="Liberation Sans, sans-serif" font-weight="bold">1.2</text><g stroke="#666" stroke-width="0.6" fill="none"><circle cx="11.5" cy="493.5" r="3.3"/><path d="M6.8 493.5h9.4M11.5 488.8v9.4"/></g><text x="15" y="489.5" font-size="3" fill="#666" font-family="Liberation Sans, sans-serif">1.2</text><g stroke="#222" stroke-width="0.8" fill="none"><path d="M7 508l4.5 1.8 4-4.5M11.5 509.8v4"/></g><text x="13.5" y="505" font-size="3.2" fill="#222" font-family="Liberation Sans, sans-serif" font-weight="bold">1.2</text><g stroke="#222" stroke-width="0.8" fill="none"><path d="M8 525.5l5-4.5M8 525.5h5"/></g><text x="15" y="524.5" font-size="3.8" fill="#222" font-family="Liberation Sans, sans-serif">α</text></svg>
<div style="left:878.00px;top:62.00px;width:135.00px;height:464.60px;background:#f0f0f0"></div>
<div style="left:878.00px;top:100.00px;width:135.00px;height:361.20px;background:#fff"></div>
<div style="left:877.30px;top:73.80px;width:0.70px;height:442.70px;background:#e3e3e3"></div>
<svg style="left:0.00px;top:0.00px;" width="1013.00" height="538.00" viewBox="0 0 1013.00 538.00"><path d="M927 65.3h37" stroke="#c6c6c6" stroke-width="0.9"/><rect x="879.2" y="67.4" width="15.8" height="15.4" fill="#c6dff5" stroke="#b5d6f1" stroke-width="0.4"/><path d="M883 78.3v-2.8l3.7-2.6 5.2 2.6v2.8zM886.7 72.9v5.4" fill="none" stroke="#1f3044" stroke-width="0.95"/><path d="M898.3 69.5v11.5" stroke="#b5b5b5" stroke-width="0.6"/><rect x="904.3" y="72" width="9.4" height="6.8" rx="0.8" fill="none" stroke="#2e2e2e" stroke-width="0.95"/><path d="M906 77.5l2-3 1.5 1.8 1.2-1 1.5 2.2z" fill="none" stroke="#333" stroke-width="0.6"/><path d="M920.3 78.8v-5.4l2-1.6h2.6v1.6h4.6v5.4zM922.5 78.8v-4.2" fill="none" stroke="#2e2e2e" stroke-width="0.95"/><path d="M937.3 71.8h5.8v6.2h-5.8zM939 73.4h5.8v6.4h-5.8" fill="none" stroke="#2e2e2e" stroke-width="0.95"/><rect x="994.2" y="70.3" width="16.5" height="9.6" rx="0.8" fill="#e6e6e6" stroke="#b9b9b9" stroke-width="0.5"/><path d="M997 73.2h6M997 75.1h6M997 77h6" stroke="#555" stroke-width="0.6"/><path d="M1006.8 73.4l1.7 1.7-1.7 1.7z" fill="#222"/><rect x="879.6" y="86.2" width="132.4" height="11.8" fill="#fff" stroke="#7f7f7f" stroke-width="0.6"/><rect x="887" y="462" width="83.4" height="7.4" fill="#cdcdcd"/><path d="M882.7 463.6l-1.8 2.1 1.8 2.1M1007.3 463.6l1.8 2.1-1.8 2.1" stroke="#333" stroke-width="0.8" fill="none"/><circle cx="887" cy="479" r="2.7" fill="none" stroke="#bcd6ee" stroke-width="0.7"/><path d="M885.4 479h3.2M887 477.4v3.2" stroke="#bcd6ee" stroke-width="0.6"/><rect x="899" y="476" width="7.6" height="5.8" fill="#fff" stroke="#2a6fb5" stroke-width="0.7"/><path d="M899 477.3h7.6" stroke="#2a6fb5" stroke-width="0.8"/><path d="M902 479.6h2.5" stroke="#2a6fb5" stroke-width="0.6"/><path d="M915.5 476.2l5.6 5.6M921.1 476.2l-5.6 5.6" stroke="#f0a090" stroke-width="0.7"/><rect x="879.2" y="489" width="133" height="9.6" fill="#d5d5d5"/><path d="M882.8 492.9h3.2l-1.6 1.9z" fill="#222"/><path d="M881.3 504.5h4v3.5l-1 1h-3zM885.3 506h1" fill="none" stroke="#333" stroke-width="0.7"/><rect x="879.3" y="513.6" width="132.4" height="10.2" fill="#e1e1e1" stroke="#adadad" stroke-width="0.6"/><rect x="933" y="527.2" width="67.5" height="10.8" fill="#f6f6f6"/><rect x="921.5" y="529.7" width="5.6" height="4" fill="#f0f0f0" stroke="#222" stroke-width="0.8"/><rect x="923.6" y="531.6" width="5.6" height="4" fill="#f0f0f0" stroke="#222" stroke-width="0.8"/><path d="M881.9 104.1l2.1 2.2 2.1-2.2" stroke="#1a1a1a" stroke-width="1" fill="none"/><g transform="translate(894.0 105.0) scale(1.05)" fill="none" stroke="#2e2e2e" stroke-width="0.78"><path d="M-4.2 2.6v-2.8l3.4-2.4 5 2.4v2.8zM-0.8 -2.6v5.2" /></g><path d="M886.9 115.7l2.1 2.2 2.1-2.2" stroke="#1a1a1a" stroke-width="1" fill="none"/><g transform="translate(899.0 116.6) scale(1.05)" fill="none" stroke="#2e2e2e" stroke-width="0.78"><path d="M-3.8 2.8v-5.6h2.6v1.6h5v4z"/></g><g transform="translate(904.0 128.2) scale(1.05)" fill="none" stroke="#2e2e2e" stroke-width="0.78"><path d="M-3.8 2.8v-5.6h2.6v1.6h5v4z"/></g><g transform="translate(904.0 139.8) scale(1.05)" fill="none" stroke="#2e2e2e" stroke-width="0.78"><path d="M-3.8 2.8v-5.6h2.6v1.6h5v4z"/></g><g transform="translate(904.0 151.4) scale(1.05)" fill="none" stroke="#2e2e2e" stroke-width="0.78"><path d="M-3.8 2.8v-5.6h2.6v1.6h5v4z"/></g><g transform="translate(904.0 163.0) scale(1.05)" fill="none" stroke="#2e2e2e" stroke-width="0.78"><path d="M-3.8 2.8v-5.6h2.6v1.6h5v4z"/></g><path d="M886.9 173.7l2.1 2.2 2.1-2.2" stroke="#1a1a1a" stroke-width="1" fill="none"/><g transform="translate(899.0 174.6) scale(1.05)" fill="none" stroke="#2e2e2e" stroke-width="0.78"><path d="M-4 2.8v-4h8v4zM-4 -1.2l1.5-1.8h5l1.5 1.8"/></g><g transform="translate(904.0 186.2) scale(1.05)" fill="none" stroke="#2e2e2e" stroke-width="0.78"><path d="M-4 2.8v-4h8v4zM-4 -1.2l1.5-1.8h5l1.5 1.8"/></g><g transform="translate(904.0 197.8) scale(1.05)" fill="none" stroke="#2e2e2e" stroke-width="0.78"><path d="M-4 2.8v-4h8v4zM-4 -1.2l1.5-1.8h5l1.5 1.8"/></g><path d="M886.9 208.5l2.1 2.2 2.1-2.2" stroke="#1a1a1a" stroke-width="1" fill="none"/><g transform="translate(899.0 209.4) scale(1.05)" fill="none" stroke="#2e2e2e" stroke-width="0.78"><path d="M-3.8 2.8v-3.6l3.8-2.4 3.8 2.4v3.6z"/></g><g transform="translate(904.0 221.0) scale(1.05)" fill="none" stroke="#2e2e2e" stroke-width="0.78"><path d="M-3.8 2.8v-3.6l3.8-2.4 3.8 2.4v3.6z"/></g><g transform="translate(904.0 232.6) scale(1.05)" fill="none" stroke="#2e2e2e" stroke-width="0.78"><path d="M-3.8 2.8v-3.6l3.8-2.4 3.8 2.4v3.6z"/></g><g transform="translate(904.0 244.2) scale(1.05)" fill="none" stroke="#2e2e2e" stroke-width="0.78"><path d="M-3.8 2.8v-3.6l3.8-2.4 3.8 2.4v3.6z"/></g><g transform="translate(904.0 255.8) scale(1.05)" fill="none" stroke="#2e2e2e" stroke-width="0.78"><path d="M-3.8 2.8v-3.6l3.8-2.4 3.8 2.4v3.6z"/></g><g transform="translate(899.0 267.4) scale(1.05)" fill="none" stroke="#2e2e2e" stroke-width="0.78"><rect x="-4.2" y="-3" width="8.4" height="6"/><path d="M-2.6 2.9v-4h2v4M1 -1.2h1.8v1.4h-1.8z"/></g><g transform="translate(899.0 279.0) scale(1.05)" fill="none" stroke="#2e2e2e" stroke-width="0.78"><path d="M-4.2 3v-6h6.2l2.2 2v4z"/><path d="M-2.5 1.5l3-3 1 1-3 3zM-2.8 1.8h4.5" stroke-width="0.6"/></g><g transform="translate(899.0 290.6) scale(1.05)" fill="none" stroke="#2e2e2e" stroke-width="0.78"><circle cx="0" cy="0" r="3.8"/><path d="M-3.8 -0.5h3v4.2M-0.8 -3.7v3.2M-0.8 0.8h4.4"/></g><g transform="translate(899.0 302.2) scale(1.05)" fill="none" stroke="#2e2e2e" stroke-width="0.78"><path d="M-4.2 3v-5.5h6.2l2.2 2v3.5zM-3 -2.5v-0.8h4"/><path d="M-2.3 1.5v-2.5h2.6v2.5zM-2.3 -1l0.9-0.8h2.6l-0.9 0.8M1.2 -1.8v2.4l-0.9 0.9" stroke-width="0.55"/></g><path d="M886.9 312.9l2.1 2.2 2.1-2.2" stroke="#1a1a1a" stroke-width="1" fill="none"/><g transform="translate(899.0 313.8) scale(1.05)" fill="none" stroke="#2e2e2e" stroke-width="0.78"><path d="M-4 -2.2l2.2-1.2h5.6v6.6h-5.6l-2.2 1.2zM-1.8 -3.4v6.6"/></g><rect x="878.2" y="320.0" width="135" height="10.6" fill="#d9d9d9"/><g transform="translate(904.0 325.4) scale(1.05)" fill="none" stroke="#2e2e2e" stroke-width="0.78"><path d="M-3.6 -2.6l2-1h5.2v6.4h-5.2l-2 1.2zM-1.6 -3.6v6.4"/></g><g transform="translate(904.0 337.0) scale(1.05)" fill="none" stroke="#2e2e2e" stroke-width="0.78"><path d="M-3.6 -1.8l1.6-1.6h5.6v5l-1.6 1.8h-5.6zM-3.6 -1.8h5.6v5.2M2 -1.8l1.6-1.6"/></g><g transform="translate(904.0 348.6) scale(1.05)" fill="none" stroke="#2e2e2e" stroke-width="0.78"><path d="M-4.4 1.2a2 1.5 0 1 1 3.4 0.6l-2.6 1.6M-2 -1.6h5v3h-5M3 -1l1.6-0.8v2.6l-1.6-0.8"/></g><path d="M886.9 359.3l2.1 2.2 2.1-2.2" stroke="#1a1a1a" stroke-width="1" fill="none"/><g transform="translate(899.0 360.2) scale(1.05)" fill="none" stroke="#2e2e2e" stroke-width="0.78"><rect x="-3.6" y="-4" width="7.2" height="8"/><path d="M-3.6 -1.4h7.2M-3.6 1.2h7.2M-1.2 -4v8M1.2 -4v8"/></g><path d="M893.1 369.7l2 2.1-2 2.1" stroke="#6a6a6a" stroke-width="0.8" fill="none"/><g transform="translate(904.0 371.8) scale(1.05)" fill="none" stroke="#2e2e2e" stroke-width="0.78"><rect x="-4.6" y="-1.6" width="9.2" height="3.2" fill="#777"/><path d="M-2.3 -1.6v3.2M0 -1.6v3.2M2.3 -1.6v3.2" stroke="#fff" stroke-width="0.5"/></g><path d="M893.1 381.3l2 2.1-2 2.1" stroke="#6a6a6a" stroke-width="0.8" fill="none"/><g transform="translate(904.0 383.4) scale(1.05)" fill="none" stroke="#2e2e2e" stroke-width="0.78"><path d="M-4.6 2.6l2.4-3.4 2.2 3.4zM0 2.6l2.4-3.4 2.2 3.4zM-2.2 -0.6l2.2-3 2.4 3"/></g><path d="M893.1 392.9l2 2.1-2 2.1" stroke="#6a6a6a" stroke-width="0.8" fill="none"/><g transform="translate(904.0 395.0) scale(1.05)" fill="none" stroke="#2e2e2e" stroke-width="0.78"><path d="M-3.4 3.4v-3h6.8v3zM-1 0.4v-3.6h2v3.6M-4 3.6h8"/></g><path d="M888.1 404.5l2 2.1-2 2.1" stroke="#6a6a6a" stroke-width="0.8" fill="none"/><g transform="translate(899.0 406.6) scale(1.05)" fill="none" stroke="#2e2e2e" stroke-width="0.78"><rect x="-4.4" y="-3.2" width="8.8" height="6.4"/><path d="M-2.8 2v-3.6M-1 -1.4h4.2M-1 2.2v-2h1.6v2M2 2.2v-2h1.2v2" /></g><path d="M888.1 416.1l2 2.1-2 2.1" stroke="#6a6a6a" stroke-width="0.8" fill="none"/><g transform="translate(899.0 418.2) scale(1.05)" fill="none" stroke="#2e2e2e" stroke-width="0.78"><rect x="-3.4" y="-4" width="6.8" height="8"/><path d="M-1.8 -1.8h3.6M-1.8 0h3.6M-1.8 1.8h3.6"/></g><path d="M888.1 427.7l2 2.1-2 2.1" stroke="#6a6a6a" stroke-width="0.8" fill="none"/><g transform="translate(899.0 429.8) scale(1.05)" fill="none" stroke="#2e2e2e" stroke-width="0.78"><rect x="-4.2" y="-3" width="8.4" height="6" rx="0.8"/><rect x="-1.6" y="-1.8" width="3.2" height="3.6"/></g><path d="M883.1 439.3l2 2.1-2 2.1" stroke="#6a6a6a" stroke-width="0.8" fill="none"/><g transform="translate(894.0 441.4) scale(1.05)" fill="none" stroke="#2e2e2e" stroke-width="0.78"><rect x="-4.2" y="-3" width="8.4" height="6" rx="0.8"/><rect x="-1.6" y="-1.8" width="3.2" height="3.6"/></g></svg>
<div class="t " style="left:901.60px;top:100.10px;font-size:6.1px;color:#111;transform:scaleX(0.8);transform-origin:0 50%">PROJEKT</div>
<div class="t " style="left:906.70px;top:111.70px;font-size:6.1px;color:#111">Kondygnacje</div>
<div class="t " style="left:912.00px;top:123.30px;font-size:6.1px;color:#111">2. Poziom +2</div>
<div class="t " style="left:912.00px;top:134.90px;font-size:6.1px;color:#111">1. Poziom +1</div>
<div class="t " style="left:912.00px;top:146.50px;font-size:6.1px;color:#111">0. Poziom 0</div>
<div class="t " style="left:912.00px;top:158.10px;font-size:6.1px;color:#111">-1. Poziom -1</div>
<div class="t " style="left:906.70px;top:169.70px;font-size:6.1px;color:#111">Przekroje</div>
<div class="t " style="left:912.00px;top:181.30px;font-size:6.1px;color:#111">A-01 Przekrój (Model - przebudowani</div>
<div class="t " style="left:912.00px;top:192.90px;font-size:6.1px;color:#111">A-02 Przekrój (Model - przebudowani</div>
<div class="t " style="left:906.70px;top:204.50px;font-size:6.1px;color:#111">Elewacje</div>
<div class="t " style="left:912.00px;top:216.10px;font-size:6.1px;color:#111">E-01 Elewacja PN (Model - przebudow</div>
<div class="t " style="left:912.00px;top:227.70px;font-size:6.1px;color:#111">E-02 Elewacja W (Model - przebudow</div>
<div class="t " style="left:912.00px;top:239.30px;font-size:6.1px;color:#111">E-03 Elewacja PD (Model - przebudow</div>
<div class="t " style="left:912.00px;top:250.90px;font-size:6.1px;color:#111">E-04 Elewacja Z (Model - przebudowa</div>
<div class="t " style="left:906.70px;top:262.50px;font-size:6.1px;color:#111">Rozwinięcia ścian</div>
<div class="t " style="left:906.70px;top:274.10px;font-size:6.1px;color:#111">Obszary 2D</div>
<div class="t " style="left:906.70px;top:285.70px;font-size:6.1px;color:#111">Szczegóły</div>
<div class="t " style="left:906.70px;top:297.30px;font-size:6.1px;color:#111">Dokumenty 3D</div>
<div class="t " style="left:906.70px;top:308.90px;font-size:6.1px;color:#111">3D</div>
<div class="t " style="left:912.00px;top:320.50px;font-size:6.1px;color:#111">Ogólna perspektywa</div>
<div class="t " style="left:912.00px;top:332.10px;font-size:6.1px;color:#111">Ogólna aksonometria</div>
<div class="t " style="left:912.00px;top:343.70px;font-size:6.1px;color:#111">00 Ścieżka bez nazwy</div>
<div class="t " style="left:906.70px;top:355.30px;font-size:6.1px;color:#111">Zestawienia</div>
<div class="t " style="left:912.00px;top:366.90px;font-size:6.1px;color:#111">Elementy</div>
<div class="t " style="left:912.00px;top:378.50px;font-size:6.1px;color:#111">Komponenty</div>
<div class="t " style="left:912.00px;top:390.10px;font-size:6.1px;color:#111">Rodzaje wykończenia</div>
<div class="t " style="left:906.70px;top:401.70px;font-size:6.1px;color:#111">Spisy zawartości projektu</div>
<div class="t " style="left:906.70px;top:413.30px;font-size:6.1px;color:#111">Listy</div>
<div class="t " style="left:906.70px;top:424.90px;font-size:6.1px;color:#111">Info</div>
<div class="t " style="left:901.60px;top:436.50px;font-size:6.1px;color:#111">Pomoc</div>
<div class="t " style="left:881.30px;top:87.40px;font-size:6.15px;color:#707070">Przeszukaj Mapę projektu</div>
<div class="t sb" style="left:891.60px;top:488.90px;font-size:6.0px">Cechy</div>
<div class="t " style="left:899.00px;top:501.90px;width:100.00px;text-align:center;font-size:6.1px">Ogólna perspektywa</div>
<div class="t " style="left:895.40px;top:513.80px;width:100.00px;text-align:center;font-size:6.1px">Ustawienia...</div>
<div class="t " style="left:940.50px;top:527.60px;font-size:7px;color:#ababab;letter-spacing:-0.1px">GRAPHISOFT ID</div>
<div style="left:714.10px;top:22.50px;width:135.00px;height:491.50px;background:#f0f0f0;border:0.9px solid #969696;box-shadow:0 1px 5px 1px rgba(0,0,0,0.38)"></div>
<div style="left:714.70px;top:23.10px;width:133.80px;height:17.00px;background:#fff"></div>
<div class="t " style="left:718.80px;top:26.20px;font-size:6.5px;color:#111">Menedżer profili</div>
<svg style="left:0.00px;top:0.00px;" width="1013.00" height="538.00" viewBox="0 0 1013.00 538.00"><path d="M838.2 28.8l4.6 4.6M842.8 28.8l-4.6 4.6" stroke="#222" stroke-width="0.7"/><rect x="716.2" y="40.3" width="131.0" height="11" fill="#d5d5d5"/><path d="M719.1 44.9h3.2l-1.6 1.9z" fill="#222"/><rect x="832" y="53.8" width="15" height="10.2" fill="#e4e4e4" stroke="#adadad" stroke-width="0.6"/><path d="M835 55.8v3.4a1.3 1.3 0 0 0 2.6 0v-3.4M839 55.8v3.6M839.4 58l2-2.2M837.8 60.2l4.6 2M842.2 60l-3.8 2.4M836.4 62.6h6.6" stroke="#2a2a2a" stroke-width="0.8" fill="none"/><rect x="716.3" y="66.6" width="130.8" height="14" fill="#e3e3e3" stroke="#bdbdbd" stroke-width="0.6"/><path d="M723.3 68.8h2.4v6.2h1.4v2.6h-5.2v-2.6h1.4z" fill="#333"/><path d="M722.6 76.3h3.8" stroke="#ddd" stroke-width="0.5"/><path d="M842.2 71.8l2.2 1.9-2.2 1.9z" fill="#1e1e1e"/><circle cx="723.6" cy="89.6" r="3.2" fill="none" stroke="#4a90d2" stroke-width="0.7"/><path d="M721.8 89.6h3.6M723.6 87.8v3.6" stroke="#4a90d2" stroke-width="0.7"/><text x="734.6" y="93.2" font-size="8" fill="#4a4a4a" font-family="Liberation Sans, sans-serif">A</text><path d="M741 86.4h2.6M742.3 86.4v4M741 90.4h2.6" stroke="#555" stroke-width="0.65"/><path d="M751.6 86.9l6.6 6.6M758.2 86.9l-6.6 6.6" stroke="#e0452a" stroke-width="0.95"/><rect x="716.3" y="97.6" width="62" height="11" fill="#d1d1d1"/><rect x="784.3" y="83.3" width="63" height="70" fill="#fff"/><path d="M784.3 153.3v-70h63" stroke="#6e6e6e" stroke-width="0.7" fill="none"/><defs><pattern id="ph1" width="2.3" height="2.3" patternUnits="userSpaceOnUse"><rect width="2.3" height="2.3" fill="#e4e4e4"/><path d="M-0.5 -0.5l3.3 3.3M-0.5 1.8l1 1M1.8 -0.5l1 1" stroke="#6e6e6e" stroke-width="0.8"/></pattern><pattern id="ph2" width="2.4" height="2.4" patternUnits="userSpaceOnUse"><rect width="2.4" height="2.4" fill="#cfcfcf"/><path d="M0 0l2.4 2.4M0 2.4l2.4-2.4" stroke="#444" stroke-width="0.7"/></pattern></defs><rect x="810.2" y="90.2" width="11.4" height="43" fill="url(#ph1)" stroke="#3a3a3a" stroke-width="0.6"/><rect x="821.4" y="90.2" width="3.6" height="43" fill="#5a5f66" stroke="#333" stroke-width="0.4"/><circle cx="823.3" cy="92.6" r="1.35" fill="#e8f0fb"/><circle cx="823.3" cy="96.5" r="1.35" fill="#e8f0fb"/><circle cx="823.3" cy="100.5" r="1.35" fill="#e8f0fb"/><circle cx="823.3" cy="104.4" r="1.35" fill="#e8f0fb"/><circle cx="823.3" cy="108.4" r="1.35" fill="#e8f0fb"/><circle cx="823.3" cy="112.3" r="1.35" fill="#e8f0fb"/><circle cx="823.3" cy="116.3" r="1.35" fill="#e8f0fb"/><circle cx="823.3" cy="120.2" r="1.35" fill="#e8f0fb"/><circle cx="823.3" cy="124.2" r="1.35" fill="#e8f0fb"/><circle cx="823.3" cy="128.2" r="1.35" fill="#e8f0fb"/><circle cx="823.3" cy="132.1" r="1.35" fill="#e8f0fb"/><rect x="801.2" y="133.1" width="29.8" height="14.6" fill="url(#ph2)" stroke="#2a2a2a" stroke-width="0.7"/><rect x="716.2" y="127" width="15" height="12.6" fill="#cce4f7"/><path d="M719.5 131l8-1.2v6l-8 1.8z" fill="none" stroke="#1e3c5a" stroke-width="0.8"/><path d="M735.5 130.8l8 2.6v3l-8-2.6zM735.5 130.8" fill="none" stroke="#333" stroke-width="0.7"/><path d="M754 130h2.2v6.6a1.1 0.7 0 0 1-2.2 0zM754 130a1.1 0.7 0 0 1 2.2 0" fill="none" stroke="#333" stroke-width="0.6"/><path d="M719.5 149.8v-3l7-2.4v3M719.5 146.8l7-2.4M722 148.8v-2.8M724.3 148v-2.8" fill="none" stroke="#333" stroke-width="0.6"/><path d="M737 143.4v4.2h3.6v3M737 147.6v3.2M738.8 147.6v2.2M737 143.4a1.2 1.2 0 0 1 2 0v2.8" fill="none" stroke="#333" stroke-width="0.6"/><circle cx="755" cy="147.2" r="3.2" fill="none" stroke="#333" stroke-width="0.6"/><path d="M755 146.4v2.6" stroke="#333" stroke-width="0.9"/><circle cx="755" cy="145.2" r="0.5" fill="#333"/><path d="M716 156.5h131.5" stroke="#c9c9c9" stroke-width="0.7"/><rect x="716.3" y="171.5" width="61.8" height="10.2" fill="#e1e1e1" stroke="#adadad" stroke-width="0.6"/><rect x="784.4" y="171.5" width="62.7" height="10.2" fill="#e1e1e1" stroke="#adadad" stroke-width="0.6"/><rect x="716.2" y="185.0" width="131.0" height="11" fill="#d5d5d5"/><path d="M719.1 189.6h3.2l-1.6 1.9z" fill="#222"/><rect x="715.2" y="196.2" width="132.4" height="65.6" fill="#fff"/><rect x="715" y="197.4" width="132.6" height="10" fill="#0078d7"/><path d="M725.9 202.6q4.1-4.2 8.2 0q-4.1 4.2-8.2 0z" fill="none" stroke="#fff" stroke-width="0.8"/><circle cx="730" cy="202.6" r="1.4" fill="#fff"/><path d="M725.9 213.3q4.1-4.2 8.2 0q-4.1 4.2-8.2 0z" fill="none" stroke="#222" stroke-width="0.8"/><circle cx="730" cy="213.3" r="1.4" fill="#222"/><path d="M725.9 223.8q4.1-4.2 8.2 0q-4.1 4.2-8.2 0z" fill="none" stroke="#222" stroke-width="0.8"/><circle cx="730" cy="223.8" r="1.4" fill="#222"/><path d="M725.9 234.3q4.1-4.2 8.2 0q-4.1 4.2-8.2 0z" fill="none" stroke="#222" stroke-width="0.8"/><circle cx="730" cy="234.3" r="1.4" fill="#222"/><path d="M725.9 244.9q4.1-4.2 8.2 0q-4.1 4.2-8.2 0z" fill="none" stroke="#222" stroke-width="0.8"/><circle cx="730" cy="244.9" r="1.4" fill="#222"/><path d="M725.9 255.5q4.1-4.2 8.2 0q-4.1 4.2-8.2 0z" fill="none" stroke="#c9c9c9" stroke-width="0.8"/><circle cx="730" cy="255.5" r="1.4" fill="#c9c9c9"/><path d="M739 199h5.6v7h-5.6zM740.6 200.4h2.5M740.6 204.6h2.5M740.6 200.4v4.2" fill="none" stroke="#1a4f86" stroke-width="0.6"/><path d="M739 210h5.6v6.6h-5.6zM739 212.2h5.6M739 214.4h5.6M741.8 210v6.6M745.8 212v2.6" fill="none" stroke="#555" stroke-width="0.5"/><path d="M739.5 220.8h5M739.5 226.4h5M740.2 220v7M743.8 220v7" fill="none" stroke="#666" stroke-width="0.55" stroke-dasharray="1 0.6"/><path d="M740 238.5v-7M740 231.5h5" fill="none" stroke="#333" stroke-width="0.6"/><g fill="#222"><rect x="739.2" y="230.7" width="1.6" height="1.6"/><rect x="739.2" y="237.2" width="1.6" height="1.6"/><rect x="744.4" y="230.7" width="1.6" height="1.6"/><rect x="742" y="231" width="1" height="1"/><rect x="739.5" y="234.3" width="1" height="1"/></g><path d="M739.3 248.3v-6h5v6zM739.3 244.3h6.4M739.3 246.6h6.4M745.7 243.4l0.8 0.9-0.8 0.9" fill="none" stroke="#444" stroke-width="0.55"/><path d="M740 252.5v6.4M744.2 252.5v6.4M740 252.5l1 1.2v4l-1 1.2M744.2 252.5l-1 1.2v4l1 1.2" fill="#e6e6e6" stroke="#999" stroke-width="0.5"/><rect x="717.3" y="252.7" width="5" height="5" fill="#fff" stroke="#333" stroke-width="0.75"/><rect x="716.2" y="262.0" width="131.0" height="11" fill="#d5d5d5"/><path d="M719.1 266.6h3.2l-1.6 1.9z" fill="#222"/><rect x="716.2" y="273" width="123" height="77" fill="#fff"/><rect x="839.2" y="273" width="8.2" height="77" fill="#f7f7f7"/><path d="M789.5 273v11M802.3 273v11" stroke="#ececec" stroke-width="0.6"/><path d="M716.2 284.2h123M716.2 294.6h123M716.2 305.2h123M716.2 317h123M716.2 327.8h123M716.2 338.8h123" stroke="#f0f0f0" stroke-width="0.6"/><path d="M716.5 311.3h121.7" stroke="#a8a8a8" stroke-width="0.6"/><path d="M816.8 279h7.6" stroke="#333" stroke-width="0.6"/><path d="M816.3 279l1.6-1v2zM824.9 279l-1.6-1v2z" fill="#222"/><rect x="717.3" y="286.9" width="5" height="5" fill="#fff" stroke="#333" stroke-width="0.75"/><rect x="717.3" y="297.4" width="5" height="5" fill="#fff" stroke="#333" stroke-width="0.75"/><path d="M718.3 299.9l1.3 1.5 2.3-3" stroke="#111" stroke-width="1" fill="none"/><path d="M717.6 325.3v-5.4M717.6 319.9h4.6v3.2h-1.6M717.6 322.5l0 0" stroke="#555" stroke-width="0.6" fill="none"/><path d="M719.4 323.1l-1.2 1 1.2 1M720 325.0h4" stroke="#555" stroke-width="0.6" fill="none"/><path d="M717.6 336.2v-5.4M717.6 330.8h4.6v3.2h-1.6M717.6 333.4l0 0" stroke="#555" stroke-width="0.6" fill="none"/><path d="M719.4 334.0l-1.2 1 1.2 1M720 335.9h4" stroke="#555" stroke-width="0.6" fill="none"/><path d="M841.7 290l2-1.9 2 1.9" stroke="#a9a9a9" stroke-width="0.6" fill="none"/><path d="M841.7 344.4l2 1.9 2-1.9" stroke="#a9a9a9" stroke-width="0.6" fill="none"/><path d="M719.5 355.3h2.6M719.5 357h2.6" stroke="#2a6fb5" stroke-width="0.5"/><circle cx="725.4" cy="355.5" r="1.9" fill="none" stroke="#2a6fb5" stroke-width="0.55"/><path d="M724.4 355.5h2M725.4 354.5v2" stroke="#2a6fb5" stroke-width="0.5"/><path d="M719.3 359.6h7.4" stroke="#222" stroke-width="0.8"/><path d="M736 353.8l5.6 5.6M741.6 353.8l-5.6 5.6" stroke="#f3a694" stroke-width="0.7"/><rect x="716.2" y="365.3" width="131.0" height="11" fill="#d5d5d5"/><path d="M719.1 369.9h3.2l-1.6 1.9z" fill="#222"/><path d="M720.3 380.4h2.6v6.2h-2.6zM725 380.4h2.6v6.2h-2.6zM721 382v0.8M721 384.2v0.8M726.9 382v0.8M726.9 384.2v0.8" fill="none" stroke="#333" stroke-width="0.7"/><rect x="736.2" y="378" width="110.9" height="11" rx="0.6" fill="#fff" stroke="#8a8a8a" stroke-width="0.6"/><rect x="741" y="380.8" width="2.6" height="5.4" fill="none" stroke="#333" stroke-width="0.6"/><path d="M741.8 382.2v0.8M741.8 384v0.8" stroke="#333" stroke-width="0.5"/><path d="M745.6 380.4v6.4" stroke="#555" stroke-width="0.45"/><path d="M840.5 382.8l2 2 2-2" stroke="#333" stroke-width="0.6" fill="none"/><path d="M716 392h131.5M716 433.3h131.5M716 464.6h131.5" stroke="#c9c9c9" stroke-width="0.7"/><rect x="717.9" y="396" width="7" height="7.6" rx="1.2" fill="#fff" stroke="#3a3a3a" stroke-width="0.7"/><path d="M719.4 400.6h4M719.4 401.8h4" stroke="#222" stroke-width="1"/><path d="M719.6 397.4h2.6v1.4" stroke="#777" stroke-width="0.5" fill="none"/><path d="M726.2 399.4h5v4.2h-5zM727.7 399.4v-2.2a1 1 0 0 1 2 0v2.2M725.6 401.2h6.2" fill="#fff" stroke="#2e2e2e" stroke-width="0.75"/><rect x="737" y="397.4" width="6" height="6" rx="0.6" fill="#fff" stroke="#cdcdcd" stroke-width="0.5"/><circle cx="740" cy="411.6" r="2.9" fill="#fff" stroke="#c0c0c0" stroke-width="0.5"/><circle cx="740" cy="411.6" r="1.2" fill="#c4c4c4"/><circle cx="797.8" cy="411.6" r="2.9" fill="#fff" stroke="#c0c0c0" stroke-width="0.5"/><rect x="737" y="418" width="110.2" height="12" fill="#cdcdcd"/><rect x="739.4" y="419.4" width="9.2" height="9.2" fill="#8fc68c"/><path d="M842.4 422.8l1.5 1.4-1.5 1.4z" fill="#9a9a9a"/><rect x="737" y="438.7" width="6" height="6" rx="0.6" fill="#fff" stroke="#cdcdcd" stroke-width="0.5"/><path d="M738.3 441.8l1.3 1.4 2.4-3" stroke="#a0a0a0" stroke-width="0.6" fill="none"/><path d="M717.4 458.6v-3.2l1.4-1.6h2.8l1.4 1.6v3.2zM718.2 455.2h4M720.2 453.8v-1.4" fill="none" stroke="#6a6a6a" stroke-width="0.65"/><path d="M724.6 450.8h6.6M726 451v5.2a2 2 0 0 0 4 0v-5.2M728 451.4v4.6" fill="none" stroke="#2e2e2e" stroke-width="0.85"/><rect x="737" y="448.4" width="72.5" height="12.2" fill="#cdcdcd"/><path d="M739.6 457.8h65" stroke="#b5b5b5" stroke-width="0.8"/><path d="M806 453l1.5 1.4-1.5 1.4z" fill="#9a9a9a"/><rect x="812" y="449.4" width="15" height="10.2" fill="#f7f7f7" stroke="#d8d8d8" stroke-width="0.5"/><rect x="829" y="449" width="18.2" height="10.8" fill="#cdcdcd"/><path d="M832.7 450.5v7.8" stroke="#a9a9a9" stroke-width="0.5"/><rect x="836.8" y="450.6" width="8" height="7.6" rx="0.8" fill="#7f7f7f"/><path d="M723.6 470h-4.6q-1 0-1 1v5.8q0 1 1 1h4.8" fill="none" stroke="#2a2a2a" stroke-width="0.95"/><path d="M720.2 472.2h3.4v3.8h-3.4zM721.8 474.2l2 2.2" fill="none" stroke="#2a2a2a" stroke-width="0.8"/><path d="M725.4 470h3.4M725.4 477.8h3.4" stroke="#777" stroke-width="0.6" stroke-dasharray="0.9 0.6"/><path d="M730 469.6v8.8" stroke="#2a2a2a" stroke-width="1.2"/><rect x="737" y="471.4" width="6" height="6" rx="0.6" fill="#fff" stroke="#cdcdcd" stroke-width="0.5"/><circle cx="740" cy="489.5" r="2.9" fill="#fff" stroke="#c0c0c0" stroke-width="0.5"/><circle cx="740" cy="489.5" r="1.2" fill="#c4c4c4"/><circle cx="797.8" cy="489.5" r="2.9" fill="#fff" stroke="#c0c0c0" stroke-width="0.5"/><rect x="716.2" y="500.7" width="131.0" height="11" fill="#d5d5d5"/><path d="M719.9 504.6v3.2l1.9-1.6z" fill="#222"/></svg>
<div class="t sb" style="left:728.30px;top:40.80px;font-size:6.0px;color:#1a1a1a">Zarządzaj Profilami</div>
<div class="t " style="left:716.00px;top:53.30px;font-size:6px">Profil:</div>
<div class="t " style="left:733.80px;top:69.00px;font-size:6.25px;color:#111">Ściana fundamentowa 2-warstwowa</div>
<div class="t " style="left:716.30px;top:98.20px;width:62.00px;text-align:center;font-size:6px;color:#a2a2a2">Zapisz</div>
<div class="t " style="left:716.00px;top:116.40px;font-size:6px">Dostępne dla:</div>
<div class="t " style="left:716.00px;top:159.70px;font-size:6px">Profil zaznaczenia:</div>
<div class="t " style="left:716.30px;top:171.80px;width:61.80px;text-align:center;font-size:6.1px">Pobierz</div>
<div class="t " style="left:784.40px;top:171.80px;width:62.70px;text-align:center;font-size:6.1px">Zastosuj</div>
<div class="t sb" style="left:728.30px;top:185.50px;font-size:6.0px;color:#1a1a1a">Warstwy elementu</div>
<div class="t " style="left:750.40px;top:197.60px;font-size:6.1px;color:#fff">Konstrukcja</div>
<div class="t " style="left:750.40px;top:208.30px;font-size:6.1px;color:#111">Rysowanie</div>
<div class="t " style="left:750.40px;top:218.80px;font-size:6.1px;color:#111">Modyfikatory rozciągnięcia</div>
<div class="t " style="left:750.40px;top:229.30px;font-size:6.1px;color:#111">Wysokość/Szerokość nominalna</div>
<div class="t " style="left:750.40px;top:239.90px;font-size:6.1px;color:#111">Modyfikatory odsunięcia</div>
<div class="t " style="left:750.40px;top:250.50px;font-size:6.1px;color:#b4b4b4">Linie odniesienia otworu</div>
<div class="t sb" style="left:728.30px;top:262.50px;font-size:6.0px;color:#1a1a1a">Modyfikatory</div>
<div class="t " style="left:726.00px;top:274.00px;font-size:6.05px">Nazwa</div>
<div class="t " style="left:726.00px;top:284.40px;font-size:6.05px">Rozciągnięcie w pozi...</div>
<div class="t " style="left:726.00px;top:295.00px;font-size:6.05px">Rozciągnięcie w pionie</div>
<div class="t " style="left:801.00px;top:284.40px;width:40.00px;text-align:center;font-size:5.8px;color:#c4c4c4">---</div>
<div class="t " style="left:801.00px;top:295.00px;width:40.00px;text-align:center;font-size:5.8px;color:#c4c4c4">160,00</div>
<div class="t " style="left:726.00px;top:317.50px;font-size:6.05px">Wysokość ławy</div>
<div class="t " style="left:726.00px;top:328.40px;font-size:6.05px">Wysokość ściany</div>
<div class="t " style="left:801.00px;top:317.50px;width:40.00px;text-align:center;font-size:5.8px;color:#c4c4c4">40,00</div>
<div class="t " style="left:801.00px;top:328.40px;width:40.00px;text-align:center;font-size:5.8px;color:#c4c4c4">120,00</div>
<div class="t sb" style="left:728.30px;top:365.80px;font-size:6.0px;color:#1a1a1a">Komponenty - Domyślne</div>
<div class="t " style="left:747.80px;top:378.70px;font-size:6.1px">Rdzeń</div>
<div class="t " style="left:745.00px;top:395.40px;font-size:6.15px;color:#8d8d8d">Zastąp wykończenia powierzchni</div>
<div class="t " style="left:745.00px;top:406.60px;font-size:6.15px;color:#8d8d8d">Jednakowy</div>
<div class="t " style="left:803.00px;top:406.60px;font-size:6.15px;color:#8d8d8d">Różne</div>
<div class="t " style="left:750.80px;top:419.10px;font-size:6.15px;color:#a9a9a9">Farba - Zieleń lasu</div>
<div class="t " style="left:745.00px;top:436.80px;font-size:6.15px;color:#8d8d8d">Pokaż linię zakończenia</div>
<div class="t " style="left:739.80px;top:448.30px;font-size:6.15px;color:#a5a5a5">Linia ciągła</div>
<div class="t " style="left:814.80px;top:449.60px;font-size:6px;color:#8d8d8d">1</div>
<div class="t " style="left:745.00px;top:466.70px;font-size:6.15px;color:#8d8d8d">Odniesienie powierzchnia</div>
<div class="t " style="left:745.00px;top:473.50px;font-size:6.15px;color:#8d8d8d">komponentów:</div>
<div class="t " style="left:745.00px;top:484.50px;font-size:6.15px;color:#8d8d8d">Linia bazowa</div>
<div class="t " style="left:803.00px;top:484.50px;font-size:6.15px;color:#8d8d8d">Okrąg bazowy</div>
<div class="t sb" style="left:728.30px;top:501.20px;font-size:6.0px;color:#1a1a1a">Jednolite Obrysy Profilu</div>
</div>
</body></html>
